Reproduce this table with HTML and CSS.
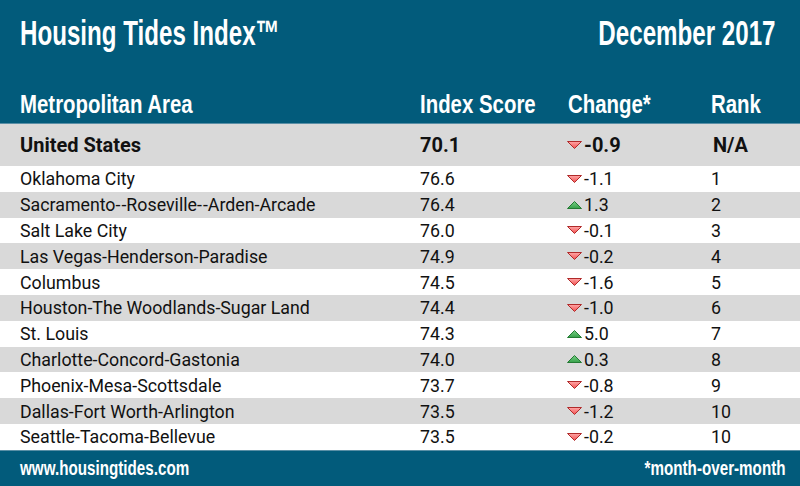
FILE: index.html
```html
<!DOCTYPE html>
<html>
<head>
<meta charset="utf-8">
<link rel="stylesheet" href="styles.css">
</head>
<body>
<div class="page">
  <header class="top">
    <div class="titlebar">
      <h1 class="title"><span class="cond lt">Housing Tides Index™</span></h1>
      <span class="date"><span class="cond rt">December 2017</span></span>
    </div>
    <div class="grid cols">
      <span class="cond2">Metropolitan Area</span>
      <span class="cond2">Index Score</span>
      <span class="cond2">Change*</span>
      <span class="cond2">Rank</span>
    </div>
  </header>
  <div class="grid row us">
    <span>United States</span><span>70.1</span>
    <span class="chg"><svg class="tri" viewBox="0 0 15 8"><polygon points="0.5,0.5 14.5,0.5 7.5,7.5" class="down"/></svg>-0.9</span>
    <span class="rank">N/A</span>
  </div>
  <div class="rows">
    <div class="grid row"><span>Oklahoma City</span><span>76.6</span><span class="chg"><svg class="tri" viewBox="0 0 15 8"><polygon points="0.5,0.5 14.5,0.5 7.5,7.5" class="down"/></svg>-1.1</span><span>1</span></div>
    <div class="grid row alt"><span>Sacramento-<span class="gap">-</span>Roseville-<span class="gap">-</span>Arden-Arcade</span><span>76.4</span><span class="chg"><svg class="tri" viewBox="0 0 15 8"><polygon points="0.5,7.5 14.5,7.5 7.5,0.5" class="up"/></svg>1.3</span><span>2</span></div>
    <div class="grid row"><span>Salt Lake City</span><span>76.0</span><span class="chg"><svg class="tri" viewBox="0 0 15 8"><polygon points="0.5,0.5 14.5,0.5 7.5,7.5" class="down"/></svg>-0.1</span><span>3</span></div>
    <div class="grid row alt"><span>Las Vegas-Henderson-Paradise</span><span>74.9</span><span class="chg"><svg class="tri" viewBox="0 0 15 8"><polygon points="0.5,0.5 14.5,0.5 7.5,7.5" class="down"/></svg>-0.2</span><span>4</span></div>
    <div class="grid row"><span>Columbus</span><span>74.5</span><span class="chg"><svg class="tri" viewBox="0 0 15 8"><polygon points="0.5,0.5 14.5,0.5 7.5,7.5" class="down"/></svg>-1.6</span><span>5</span></div>
    <div class="grid row alt"><span>Houston-The Woodlands-Sugar Land</span><span>74.4</span><span class="chg"><svg class="tri" viewBox="0 0 15 8"><polygon points="0.5,0.5 14.5,0.5 7.5,7.5" class="down"/></svg>-1.0</span><span>6</span></div>
    <div class="grid row"><span>St. Louis</span><span>74.3</span><span class="chg"><svg class="tri" viewBox="0 0 15 8"><polygon points="0.5,7.5 14.5,7.5 7.5,0.5" class="up"/></svg>5.0</span><span>7</span></div>
    <div class="grid row alt"><span>Charlotte-Concord-Gastonia</span><span>74.0</span><span class="chg"><svg class="tri" viewBox="0 0 15 8"><polygon points="0.5,7.5 14.5,7.5 7.5,0.5" class="up"/></svg>0.3</span><span>8</span></div>
    <div class="grid row"><span>Phoenix-Mesa-Scottsdale</span><span>73.7</span><span class="chg"><svg class="tri" viewBox="0 0 15 8"><polygon points="0.5,0.5 14.5,0.5 7.5,7.5" class="down"/></svg>-0.8</span><span>9</span></div>
    <div class="grid row alt"><span>Dallas-Fort Worth-Arlington</span><span>73.5</span><span class="chg"><svg class="tri" viewBox="0 0 15 8"><polygon points="0.5,0.5 14.5,0.5 7.5,7.5" class="down"/></svg>-1.2</span><span>10</span></div>
    <div class="grid row"><span>Seattle-Tacoma-Bellevue</span><span>73.5</span><span class="chg"><svg class="tri" viewBox="0 0 15 8"><polygon points="0.5,0.5 14.5,0.5 7.5,7.5" class="down"/></svg>-0.2</span><span>10</span></div>
  </div>
  <footer class="foot">
    <span class="cond3 lt">www.housingtides.com</span>
    <span class="cond3 rt">*month-over-month</span>
  </footer>
</div>
<svg width="0" height="0" class="defs">
  <defs>
    <linearGradient id="gr" x1="0" y1="0" x2="0" y2="1">
      <stop offset="0" stop-color="#ffa8a8"/>
      <stop offset="1" stop-color="#f25050"/>
    </linearGradient>
    <linearGradient id="gg" x1="0" y1="0" x2="0" y2="1">
      <stop offset="0" stop-color="#79cf86"/>
      <stop offset="1" stop-color="#35a049"/>
    </linearGradient>
  </defs>
</svg>
</body>
</html>
```
FILE: styles.css
```css
* { box-sizing: border-box; margin: 0; padding: 0; }
html, body { width: 800px; height: 486px; overflow: hidden; background: #fff; }
.page { width: 800px; height: 486px; display: flex; flex-direction: column; }
.top {
  background: #025b7b;
  height: 124px;
  border-bottom: 1px solid #5a8fa6;
  color: #fff;
  font-family: "Liberation Sans", sans-serif;
  font-weight: bold;
  display: flex;
  flex-direction: column;
  justify-content: space-between;
}
.titlebar {
  display: flex;
  justify-content: space-between;
  padding: 16px 24px 0 20px;
  line-height: 1;
}
.title, .date { font-size: 35.5px; font-weight: bold; line-height: 1; }
.cond { display: inline-block; transform: scaleX(0.68); white-space: nowrap; }
.cond2 { display: inline-block; transform: scaleX(0.77); transform-origin: left center; white-space: nowrap; }
.cond3 { display: inline-block; transform: scaleX(0.76); white-space: nowrap; }
.lt { transform-origin: left center; }
.rt { transform-origin: right center; }
.grid {
  display: grid;
  grid-template-columns: 400px 148px 143px 1fr;
  padding-left: 20px;
  align-items: center;
}
.cols { font-size: 26.5px; line-height: 1; padding-bottom: 6px; }
.row {
  height: 25.8px;
  font-family: Roboto, "Liberation Sans", sans-serif;
  font-size: 17.8px;
  color: #111;
  font-variant-ligatures: none;
}
.gap { margin-left: 1px; }
.row.alt { background: #d9d9d9; }
.row.us {
  height: 42px;
  background: #d9d9d9;
  font-weight: bold;
  font-size: 20px;
}
.us .rank { padding-left: 2px; }
.rows { display: flex; flex-direction: column; }
.chg { display: flex; align-items: center; }
.tri { width: 15px; height: 8px; margin-right: 2px; margin-left: -1px; }
.down { fill: url(#gr); stroke: #b02a2a; stroke-width: 1; }
.up { fill: url(#gg); stroke: #237a33; stroke-width: 1; }
.defs { position: absolute; }
.foot {
  flex: 1;
  background: #025b7b;
  border-top: 1px solid #5a8fa6;
  color: #fff;
  font-family: "Liberation Sans", sans-serif;
  font-weight: bold;
  font-size: 20px;
  display: flex;
  justify-content: space-between;
  align-items: center;
  padding: 0 14px 0 20px;
}
```
